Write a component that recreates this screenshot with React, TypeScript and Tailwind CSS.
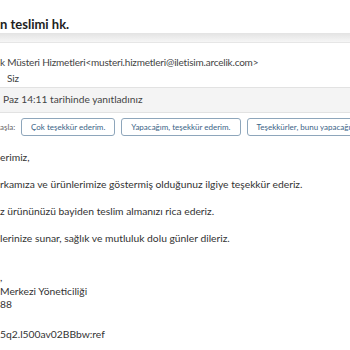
import React from 'react';

const replies = ['Çok teşekkür ederim.', 'Yapacağım, teşekkür ederim.', 'Teşekkürler, bunu yapacağım'];

const Paragraph = ({ children }: { children: React.ReactNode }) => (
  <p className="h-[27px] leading-[16px] whitespace-nowrap">{children}</p>
);

export default function App() {
  return (
    <div className="w-[350px] h-[350px] overflow-hidden bg-white text-[10.3px] text-[#333] font-['Lato',sans-serif]">
      <div className="h-[33px] pt-[15px]">
        <h1 className="text-[13px] leading-[18px] font-bold text-[#222] whitespace-nowrap">n teslimi hk.</h1>
      </div>
      <div className="h-[10px] bg-gradient-to-b from-[#e3e3e3] to-[#f6f6f6] border-b border-[#e6e6e6]" />

      <div className="pt-[11px] text-[#444] text-[10px] tracking-[-0.2px]">
        <div className="leading-[16px] whitespace-nowrap">
          k Müsteri Hizmetleri&lt;musteri.hizmetleri@iletisim.arcelik.com&gt;
        </div>
        <div className="leading-[16px] pl-[7px]">Siz</div>
      </div>

      <div className="mt-[1px] h-[26px] bg-[#f4f4f4] border-y border-[#e2e2e2] flex items-center pl-[3px] text-[10.2px] text-[#444] whitespace-nowrap">
        Paz 14:11 tarihinde yanıtladınız
      </div>

      <div className="mt-[5px] flex items-center gap-[6px] whitespace-nowrap">
        <span className="text-[8px] text-[#666] w-[15px]">aşla:</span>
        {replies.map((r) => (
          <button
            key={r}
            className="h-[18px] px-[9px] border border-[#8ea6bb] rounded-[3px] text-[8px] text-[#3a6386] leading-[16px] shrink-0"
          >
            {r}
          </button>
        ))}
      </div>

      <div className="mt-[13px]">
        <Paragraph>erimiz,</Paragraph>
        <Paragraph>rkamıza ve ürünlerimize göstermiş olduğunuz ilgiye teşekkür ederiz.</Paragraph>
        <Paragraph>z ürününüzü bayiden teslim almanızı rica ederiz.</Paragraph>
        <Paragraph>lerinize sunar, sağlık ve mutluluk dolu günler dileriz.</Paragraph>
      </div>

      <div className="mt-[14px] leading-[13px]">
        <div>,</div>
        <div className="mt-[1px]">Merkezi Yöneticiliği</div>
        <div>88</div>
        <div className="mt-[17px]">5q2.l500av02BBbw:ref</div>
      </div>
    </div>
  );
}
